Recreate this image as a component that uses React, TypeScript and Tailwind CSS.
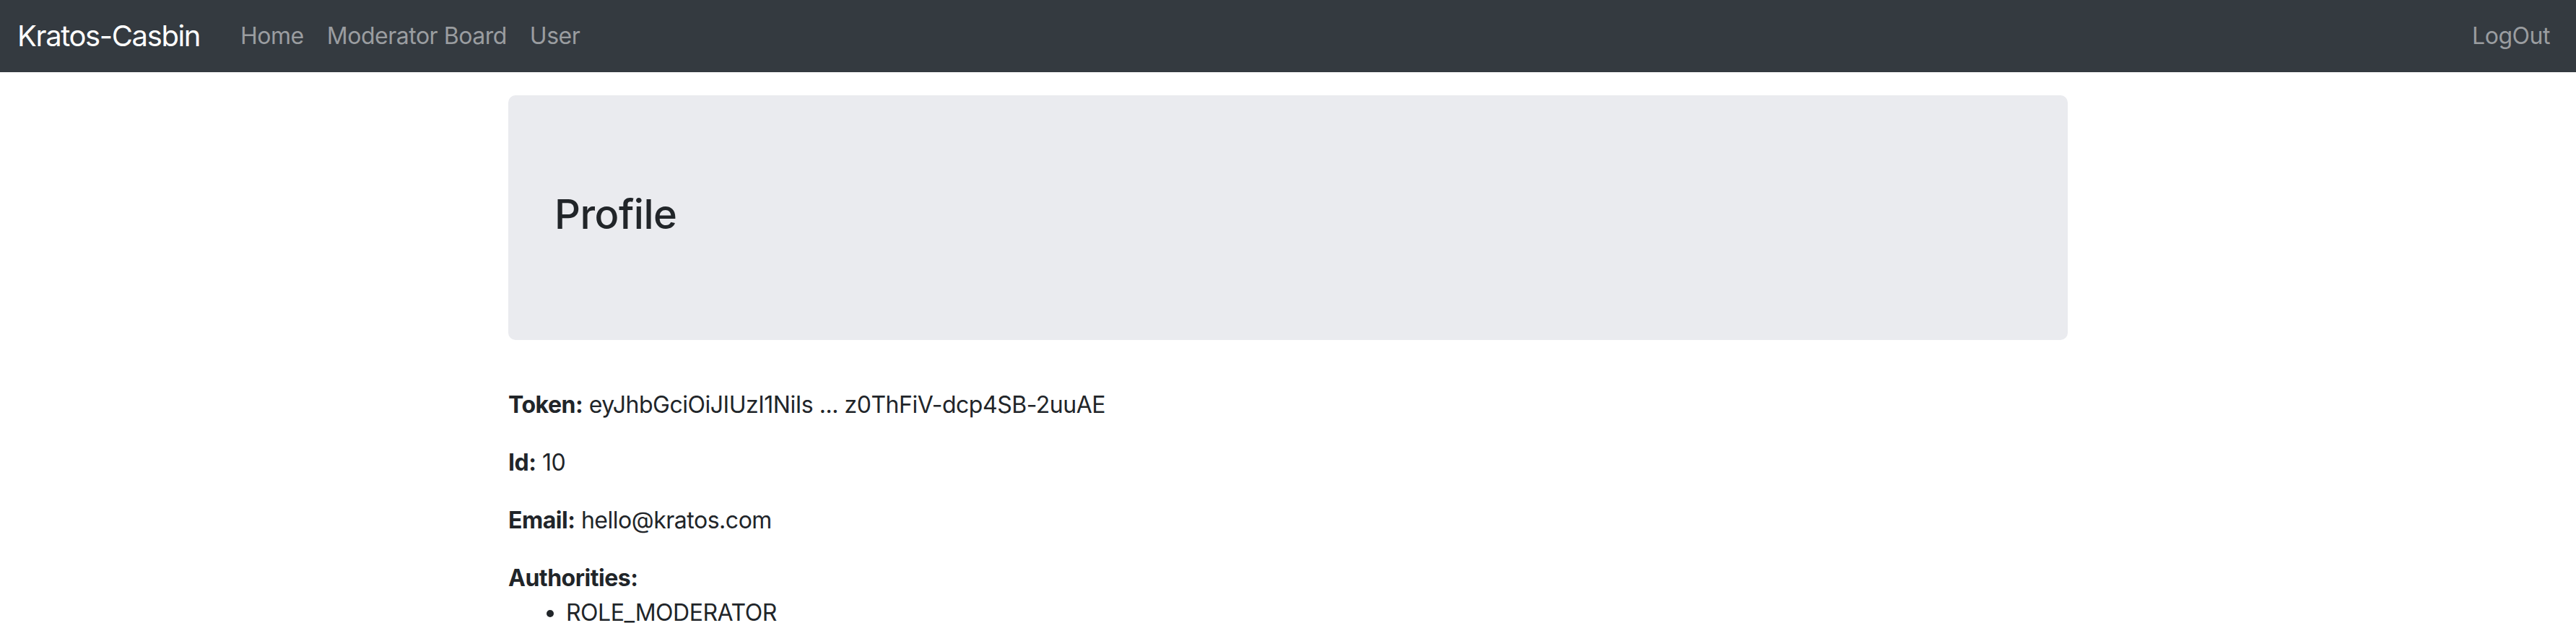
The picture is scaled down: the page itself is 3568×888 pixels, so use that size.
export default function App() {
  return (
    <div className="min-h-screen bg-white font-['Inter',sans-serif] tracking-[-0.03em] text-[#212529]">
      <nav className="flex h-[100px] items-center bg-[#343a40] pl-[24px] pr-[20px]">
        <a className="mr-[40px] text-[40px] tracking-[-0.035em] leading-[60px] text-white">Kratos-Casbin</a>
        <div className="flex items-center">
          <a className="px-[16px] text-[32px] leading-[48px] text-[#9a9da0]">Home</a>
          <a className="px-[16px] text-[32px] leading-[48px] text-[#9a9da0]">Moderator Board</a>
          <a className="px-[16px] text-[32px] leading-[48px] text-[#9a9da0]">User</a>
        </div>
        <div className="ml-auto">
          <a className="px-[16px] text-[32px] leading-[48px] text-[#9a9da0]">LogOut</a>
        </div>
      </nav>

      <div className="mx-auto mt-[32px] w-[2160px]">
        <header className="mb-[66px] rounded-[10px] bg-[#eaebef] px-[64px] pt-[132px] pb-[124px]">
          <h3 className="mb-[16px] text-[56px] font-medium leading-[1.2]">Profile</h3>
        </header>

        <div className="text-[32px] leading-[48px]">
          <p className="mb-[32px]">
            <strong className="font-bold">Token:</strong> eyJhbGciOiJIUzI1NiIs ... z0ThFiV-dcp4SB-2uuAE
          </p>
          <p className="mb-[32px]">
            <strong className="font-bold">Id:</strong> 10
          </p>
          <p className="mb-[32px]">
            <strong className="font-bold">Email:</strong> hello@kratos.com
          </p>
          <strong className="font-bold">Authorities:</strong>
          <ul className="list-disc pl-[80px]">
            <li>ROLE_MODERATOR</li>
          </ul>
        </div>
      </div>
    </div>
  );
}
